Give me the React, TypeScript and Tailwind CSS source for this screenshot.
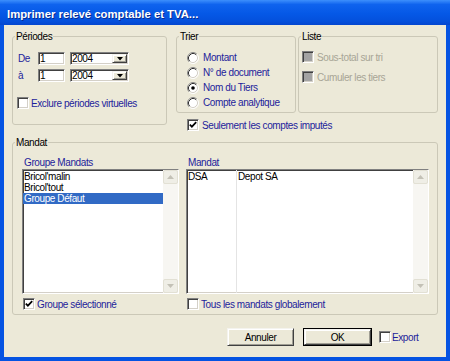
import React from "react";

const sunken =
  "border border-t-[#808080] border-l-[#808080] border-b-white border-r-white shadow-[inset_1px_1px_0_#404040,inset_-1px_-1px_0_#d4d0c8]";
const raised =
  "border border-t-[#f4f3ee] border-l-[#f4f3ee] border-b-[#404040] border-r-[#404040] shadow-[inset_1px_1px_0_#ffffff,inset_-1px_-1px_0_#a09e94]";

function Check({ checked = false, disabled = false }: { checked?: boolean; disabled?: boolean }) {
  return (
    <div
      className={`w-[12px] h-[12px] shrink-0 flex items-center justify-center ${sunken} ${
        disabled ? "bg-[#a3a3a3]" : "bg-white"
      }`}
    >
      {checked && (
        <svg width="8" height="8" viewBox="0 0 8 8">
          <polyline points="0.8,3.6 2.9,5.7 7.2,1.2" fill="none" stroke="#000" strokeWidth="1.7" />
        </svg>
      )}
    </div>
  );
}

function Radio({ checked = false }: { checked?: boolean }) {
  return (
    <svg width="12" height="12" viewBox="0 0 12 12" className="shrink-0">
      <circle cx="6" cy="6" r="5" fill="#fff" />
      <path d="M2.11 9.89 A5.5 5.5 0 0 1 9.89 2.11" stroke="#8a8a8a" fill="none" />
      <path d="M9.89 2.11 A5.5 5.5 0 0 1 2.11 9.89" stroke="#fff" fill="none" />
      <path d="M2.82 9.18 A4.5 4.5 0 0 1 9.18 2.82" stroke="#303030" fill="none" />
      <path d="M9.18 2.82 A4.5 4.5 0 0 1 2.82 9.18" stroke="#d4d0c8" fill="none" />
      {checked && <circle cx="6" cy="6" r="1.8" fill="#000" />}
    </svg>
  );
}

function ScrollBtn({ up }: { up?: boolean }) {
  return (
    <div className="h-[14px] shrink-0 border border-[#e2e0d4] bg-[#efeee6] rounded-[2px] flex items-center justify-center">
      <svg width="7" height="4" viewBox="0 0 7 4">
        {up ? (
          <polygon points="0,4 3.5,0 7,4" fill="#c3c1b6" />
        ) : (
          <polygon points="0,0 3.5,4 7,0" fill="#c3c1b6" />
        )}
      </svg>
    </div>
  );
}

function ScrollBar() {
  return (
    <div className="w-[15px] shrink-0 h-full flex flex-col bg-[#f5f4ef]">
      <ScrollBtn up />
      <div className="flex-1 bg-[#f7f6f2]" />
      <ScrollBtn />
    </div>
  );
}

function Select({ value }: { value: string }) {
  return (
    <div className={`w-[59px] h-[13px] bg-white flex items-center ${sunken}`}>
      <span className="flex-1 pl-[1px]">{value}</span>
      <div className={`w-[15px] h-[9px] mr-[1px] bg-[#ece9d8] flex items-center justify-center ${raised}`}>
        <svg width="6" height="4" viewBox="0 0 6 4">
          <polygon points="0,0 6,0 3,3.5" fill="#000" />
        </svg>
      </div>
    </div>
  );
}

const blue = "text-[#1d1d9b]";
const group = "border border-[#cbc8b7] rounded-[3px] shrink-0";

export default function App() {
  return (
    <div className="w-[450px] h-[361px] flex flex-col bg-[#0553e2] font-['Liberation_Sans',Arial,sans-serif] text-[10px] leading-[11px] tracking-[-0.4px] text-black">
      <div className="h-[25px] shrink-0 flex items-center pl-[7px] pt-[3px] bg-[linear-gradient(to_bottom,#3d8ffc_0%,#0f63ee_18%,#0558e6_55%,#0450dc_85%,#0446cf_100%)]">
        <span className="text-white font-bold text-[11.3px] tracking-normal [text-shadow:1px_1px_0_#0a2c90]">
          Imprimer relevé comptable et TVA...
        </span>
      </div>

      <div className="flex-1 ml-[4px] mr-[4px] mb-[4px] bg-[#ece9d8] flex flex-col pl-[8px] pt-[6px]">
        {/* top section */}
        <div className="flex h-[100px] items-start">
          {/* Périodes */}
          <fieldset className={`${group} w-[155px] h-[94px]`}>
            <legend className="ml-[2px] px-[1px]">Périodes</legend>
            <div className="mt-[10px] flex items-center">
              <span className={`w-[25px] pl-[5px] ${blue}`}>De</span>
              <div className={`w-[27px] h-[13px] bg-white pl-[1px] flex items-center ${sunken}`}>1</div>
              <div className="ml-[5px]">
                <Select value="2004" />
              </div>
            </div>
            <div className="mt-[4px] flex items-center">
              <span className={`w-[25px] pl-[5px] ${blue}`}>à</span>
              <div className={`w-[27px] h-[13px] bg-white pl-[1px] flex items-center ${sunken}`}>1</div>
              <div className="ml-[5px]">
                <Select value="2004" />
              </div>
            </div>
            <div className="mt-[15px] flex items-center pl-[4px]">
              <Check />
              <span className={`ml-[2px] ${blue}`}>Exclure périodes virtuelles</span>
            </div>
          </fieldset>

          {/* Trier column */}
          <div className="ml-[9px] w-[120px] flex flex-col">
            <fieldset className={`${group} w-[120px] h-[82px]`}>
              <legend className="ml-[2px] px-[1px]">Trier</legend>
              <div className="mt-[8px] flex flex-col pl-[10px]">
                {[
                  ["Montant", false],
                  ["N° de document", false],
                  ["Nom du Tiers", true],
                  ["Compte analytique", false],
                ].map(([label, on]) => (
                  <div key={label as string} className="h-[15px] flex items-center">
                    <Radio checked={on as boolean} />
                    <span className={`ml-[4px] ${blue}`}>{label as string}</span>
                  </div>
                ))}
              </div>
            </fieldset>
            <div className="mt-[6px] flex items-center pl-[11px] whitespace-nowrap">
              <Check checked />
              <span className={`ml-[3px] ${blue}`}>Seulement les comptes imputés</span>
            </div>
          </div>

          {/* Liste */}
          <fieldset className={`${group} ml-[2px] w-[140px] h-[82px]`}>
            <legend className="ml-[2px] px-[1px]">Liste</legend>
            <div className="mt-[9px] flex items-center pl-[3px]">
              <Check disabled />
              <span className="ml-[3px] text-[#a8a596]">Sous-total sur tri</span>
            </div>
            <div className="mt-[8px] flex items-center pl-[3px]">
              <Check disabled />
              <span className="ml-[3px] text-[#a8a596]">Cumuler les tiers</span>
            </div>
          </fieldset>
        </div>

        {/* Mandat */}
        <fieldset className={`${group} mt-[6px] w-[426px] h-[178px]`}>
          <legend className="ml-[2px] px-[1px]">Mandat</legend>
          <div className="flex pl-[9px] mt-[9px]">
            <div className="w-[157px] flex flex-col">
              <div className={`h-[12px] pl-[2px] ${blue}`}>Groupe Mandats</div>
              <div className={`h-[125px] bg-white flex ${sunken}`}>
                <div className="flex-1 flex flex-col pt-[1px]">
                  <div className="h-[11px] pl-[1px]">Bricol'malin</div>
                  <div className="h-[11px] pl-[1px]">Bricol'tout</div>
                  <div className="h-[11px] pl-[1px] bg-[#316ac5] text-white">Groupe Défaut</div>
                </div>
                <ScrollBar />
              </div>
              <div className="mt-[4px] flex items-center pl-[1px]">
                <Check checked />
                <span className={`ml-[2px] ${blue}`}>Groupe sélectionné</span>
              </div>
            </div>

            <div className="ml-[7px] w-[243px] flex flex-col">
              <div className={`h-[12px] pl-[2px] ${blue}`}>Mandat</div>
              <div className={`h-[125px] bg-white flex ${sunken}`}>
                <div className="w-[50px] border-r border-[#e4e4e4] pt-[1px] pl-[1px]">DSA</div>
                <div className="flex-1 pt-[1px] pl-[1px]">Depot SA</div>
                <ScrollBar />
              </div>
              <div className="mt-[4px] flex items-center pl-[1px]">
                <Check />
                <span className={`ml-[2px] ${blue}`}>Tous les mandats globalement</span>
              </div>
            </div>
          </div>
        </fieldset>

        {/* buttons */}
        <div className="mt-[13px] flex items-center pl-[215px]">
          <div className={`w-[67px] h-[18px] bg-[#ece9d8] flex items-center justify-center ${raised}`}>Annuler</div>
          <div className="ml-[9px] w-[69px] h-[18px] border border-black">
            <div className={`w-full h-full bg-[#ece9d8] flex items-center justify-center ${raised}`}>OK</div>
          </div>
          <div className="ml-[7px] flex items-center">
            <Check />
            <span className={`ml-[1px] ${blue}`}>Export</span>
          </div>
        </div>
      </div>
    </div>
  );
}
